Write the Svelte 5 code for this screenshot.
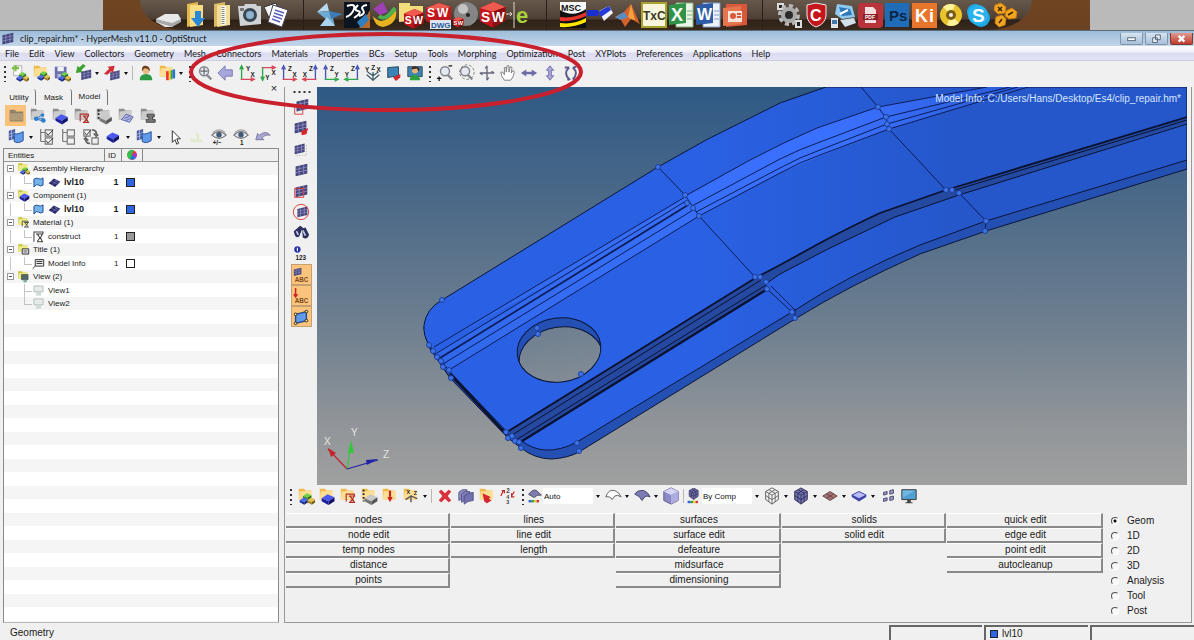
<script>
  let page = $state('Geom');
  let tab = $state('Model');

  const pages = ['Geom', '1D', '2D', '3D', 'Analysis', 'Tool', 'Post'];
  const menus = [
    'File', 'Edit', 'View', 'Collectors', 'Geometry', 'Mesh', 'Connectors', 'Materials',
    'Properties', 'BCs', 'Setup', 'Tools', 'Morphing', 'Optimization', 'Post', 'XYPlots',
    'Preferences', 'Applications', 'Help'
  ];
  const columns = [
    ['nodes', 'node edit', 'temp nodes', 'distance', 'points'],
    ['lines', 'line edit', 'length'],
    ['surfaces', 'surface edit', 'defeature', 'midsurface', 'dimensioning'],
    ['solids', 'solid edit'],
    ['quick edit', 'edge edit', 'point edit', 'autocleanup']
  ];

  // '|' separator, ':' grip, 'v' drop-down arrow
  const dockItems = [
    'drive', 'download', 'zip', 'camera', 'cards', '|',
    'fold', 'catia', 'swirl', 'swfolder', 'swdwg', 'sphere', 'sw', 'edraw', '|',
    'msc', 'flag', 'matlab', 'txc', 'excel', 'word', 'ppt', '|',
    'gear', 'shield', 'network', 'pdf', 'ps', 'ki', 'disc', 'skype', 'hexes'
  ];
  const mainTools = [
    ':', 'newModel', 'openModel', 'saveModel', 'importFile', 'v', 'exportFile', 'v', '|',
    'user', 'colorFolder', 'v', ':', 'fit', 'back', 'xyTop', 'xyBottom', 'xzLeft', 'xzRight',
    'yzLeft', 'yzRight', 'iso', 'reverse', 'userView', ':',
    'zoomInOut', 'zoomCircle', 'center', 'hand', 'arrowsH', 'arrowsV', 'rotate'
  ];
  const treeTools = ['fEntity', 'fAssembly', 'fComp', 'fMaterial', 'fProperty', 'fSet', 'fLoad'];
  const showTools = [
    'sheets', 'v', 'checkAll', 'checkNone', 'checkSwap', 'blueBox', 'v', 'sheets', 'v',
    'cursor', 'faded', 'eyePm', 'eyeOne', 'undo'
  ];
  const sideTools = [
    'maskBox', 'maskRed', 'maskDots', 'meshOnly', 'maskSquare', 'maskRound', 'binoculars',
    'info', 'abcMesh', 'abcArrow', 'handles'
  ];
  const lowA = [
    ':', 'cAssembly', 'cComp', 'cMaterial', 'cProperty', 'cLoad', 'cSystem', 'v', '|',
    'redX', 'stack', 'folderArrow', 'renumber', ':'
  ];
  const lowB = ['wireSurf', 'v', 'shadeSurf', 'v', 'shadeCube', '|'];
  const lowC = ['wireCube', 'v', 'solidCube', 'v', 'redSheet', 'v', 'blueSheet', 'v', 'shrink', 'monitor'];

  const tree = [
    { name: 'Assembly Hierarchy', icon: 'tAssembly' },
    { name: 'lvl10', icon: 'tSheet', pair: true, id: 1, color: '#2f66e0' },
    { name: 'Component (1)', icon: 'tComp' },
    { name: 'lvl10', icon: 'tSheet', pair: true, id: 1, color: '#2f66e0' },
    { name: 'Material (1)', icon: 'tMaterial' },
    { name: 'construct', icon: 'tBeam', id: 1, color: '#999999' },
    { name: 'Title (1)', icon: 'tTitle' },
    { name: 'Model Info', icon: 'tNote', id: 1, color: '#ffffff' },
    { name: 'View (2)', icon: 'tView' },
    { name: 'View1', icon: 'tGhost', more: true },
    { name: 'View2', icon: 'tGhost' }
  ];

  const mesh = (x = 3, y = 3, k = 1) =>
    `<g transform="translate(${x} ${y}) scale(${k})"><path d="M0 3L13 0V11L0 14Z" fill="#45467e"/><path d="M0 6.500L13 3.500M0 10L13 7M4 2V13M9 1V12" stroke="#a5a5d2" stroke-width=".7"/></g>`;
  const box = (x, y, k = 1, a = '#4a5af0', b = '#1a1f9c', c = '#10136a') =>
    `<g transform="translate(${x} ${y}) scale(${k})"><path d="M0 4L6 0L13 3L7 7Z" fill="${a}"/><path d="M0 4V7L7 11V7Z" fill="${b}"/><path d="M7 7L13 3V7L7 11Z" fill="${c}"/></g>`;
  const trio = (x, y, k = 1) =>
    `<g transform="translate(${x} ${y}) scale(${k})">${box(3, 0, 0.6, '#6fd04a', '#2f8a1c', '#1f6a12')}${box(0, 4, 0.6, '#4a6af0', '#1a2f9c', '#102070')}${box(7, 4, 0.6, '#e0c050', '#a08020', '#705810')}</g>`;
  const folder = (a = '#ffe9a8', b = '#f0b94a') =>
    `<path d="M2 2H8L9 4H16V14H2Z" fill="${b}"/><path d="M3 5L17 4L16 13L2 14Z" fill="${a}" opacity=".8"/>`;
  const grey = folder('#dcdcdc', '#8e8e8e');
  const beam = (x, y, c = '#b03028') =>
    `<path transform="translate(${x} ${y})" d="M0 9V1H9V3M3 3H10M3 10H10M4 3L7 6.5L4 10M9 3L7 6.5L9 10" fill="none" stroke="${c}" stroke-width="1.3"/>`;
  const lens = (x, y) =>
    `<path d="M${x + 3} ${y + 4}L${x + 8} ${y + 9}" stroke="#8a8a94" stroke-width="2.6"/><circle cx="${x}" cy="${y}" r="5" fill="#e6e8f2" stroke="#83838e" stroke-width="1.6"/>`;
  const word = (x, y, s, size = 7, c = '#222') =>
    `<text x="${x}" y="${y}" font-size="${size}" font-weight="700" fill="${c}">${s}</text>`;
  const up = (x, c) => `<path d="M${x} 17V3M${x - 2} 6L${x} 2L${x + 2} 6" fill="none" stroke="${c}" stroke-width="1.5"/>`;
  const right = (y, c) => `<path d="M3 ${y}H17M14 ${y - 2}L18 ${y}L14 ${y + 2}" fill="none" stroke="${c}" stroke-width="1.5"/>`;
  const left = (y, c) => `<path d="M17 ${y}H3M6 ${y - 2}L2 ${y}L6 ${y + 2}" fill="none" stroke="${c}" stroke-width="1.5"/>`;
  const G = '#2fa84e', R = '#d8475a', B = '#4b55b8';
  const eye = '<path d="M2 8Q10 0 18 8Q10 15 2 8Z" fill="#e9e9ee" stroke="#777" stroke-width="1.2"/><circle cx="10" cy="7.500" r="3" fill="#3f5b78"/><path d="M3 5Q10-1 17 5" fill="none" stroke="#888"/>';
  const swBlock = (x, y, k) =>
    `<g transform="translate(${x} ${y}) scale(${k})"><path d="M0 6L14 0L26 5V19L13 26L0 20Z" fill="#c3161c"/><path d="M0 6L14 0L26 5L13 10Z" fill="#ee5a50"/><path d="M13 10L26 5V19L13 26Z" fill="#8e0e12"/>${word(1, 20, 'S', 14, '#fff')}${word(12, 20, 'W', 14, '#fff')}</g>`;
  const cubeLines = (f, s) =>
    `<path d="M3 5L10 1L17 5V14L10 19L3 14Z" fill="${f}" stroke="${s}"/><path d="M3 5L10 9L17 5M10 9V19M3 9.500L10 14L17 9.500M6.500 3L13.500 7V16.500M13.500 3L6.500 7V16.500" fill="none" stroke="${s}" stroke-width=".9"/>`;

  const icons = {
    newModel: '<path d="M3 2H12V13H3Z" fill="#fafafa" stroke="#aaa"/><path d="M5 1V8M1 4.500H9" stroke="#7ac043" stroke-width="2.4"/>' + trio(6, 9, 1),
    openModel: folder() + trio(6, 8, 1),
    saveModel: '<path d="M2 3H15V16H2Z" fill="#6d70aa"/><path d="M5 3H12V8H5Z" fill="#f2f2fa"/><path d="M5 11H12V16H5Z" fill="#b6b8d8"/>' + trio(6, 9, 1),
    importFile: mesh(8, 6, 0.85) + '<path d="M13 2L8 7L10 9L2 10L4 2L6 4L10 0Z" fill="#3da02f"/>',
    exportFile: mesh(8, 7, 0.8) + '<path d="M1 11L7 5L5 3L13 2L11 10L9 8L5 12Z" fill="#d12d35"/>',
    user: '<path d="M3 18Q3 11 10 11T17 18Z" fill="#2f9a45"/><circle cx="10" cy="7" r="4" fill="#eab884"/><path d="M5.500 8Q5 1 10 2T14 8Q12 4 8 5Z" fill="#6a3f1f"/>',
    colorFolder: folder() + '<path d="M9 8H12V18H9Z" fill="#e33"/><path d="M12 7H14V18H12Z" fill="#fc3"/><path d="M14 7H16V17H14Z" fill="#3a3"/><path d="M16 6H19V16H16Z" fill="#27c"/>',
    fit: lens(9, 8) + '<path d="M5 8H13M9 4V12" stroke="#666" stroke-width="1.300"/>',
    back: '<path d="M1 10L9 2V6.500H17V13.500H9V18Z" fill="#a9a6dc" stroke="#7976b6"/>',
    xyTop: up(4, G) + right(17, R) + word(9, 8, 'Y') + word(14, 14, 'X'),
    xyBottom: right(4, R) + '<path d="M4 4V17M2 14L4 18L6 14" fill="none" stroke="#2fa84e" stroke-width="1.500"/>' + word(14, 12, 'X') + word(7, 18, 'Y'),
    xzLeft: up(4, B) + right(17, R) + word(9, 8, 'Z') + word(14, 14, 'X'),
    xzRight: up(16, B) + left(17, R) + word(9, 8, 'Z') + word(2, 14, 'X'),
    yzLeft: up(4, B) + right(17, G) + word(9, 8, 'Z') + word(14, 14, 'Y'),
    yzRight: up(16, B) + left(17, G) + word(9, 8, 'Z') + word(2, 14, 'Y'),
    iso: '<path d="M10 19V9M10 13L4 9M10 13L16 9M3 12L10 18L17 12" stroke="#3f5b66" stroke-width="1.400" fill="none"/>' + word(1, 9, 'Y') + word(8, 7, 'Z') + word(14, 9, 'X'),
    reverse: '<path d="M3 4L15 3V13L3 15Z" fill="#3d83b8" stroke="#245"/><path d="M9 15L17 11V15L12 19Z" fill="#d8262e"/>',
    userView: '<path d="M2 3H18V14H2Z" fill="#3d83b8" stroke="#345"/><circle cx="10" cy="7" r="3.500" fill="#e6b27c"/><path d="M6 6Q7 1 12 3T14 8L12 5Z" fill="#3b2a1a"/><path d="M4 18Q5 11 10 12T16 18Z" fill="#2ca040"/>',
    zoomInOut: lens(10, 8) + '<path d="M14 2H18M1 16H6M3.500 14V19" stroke="#111" stroke-width="1.400"/>',
    zoomCircle: lens(9, 8) + '<circle cx="11" cy="9" r="8" fill="none" stroke="#777" stroke-dasharray="3 2"/>',
    center: '<path d="M10 2V18M2 10H18M10 2L8 5M18 10L15 8M10 18L12 15M2 10L5 12" stroke="#66667c" stroke-width="1.500" fill="none"/>',
    hand: '<path d="M6 18Q2 13 2 9L4 9L6 12V4H8V9L9 2H11V9L12.500 3L14.500 4L13.500 10L16 7L17 9Q16 15 13 18Z" fill="#fff" stroke="#777"/>',
    arrowsH: '<path d="M1 10L7 6V8.500H13V6L19 10L13 14V11.500H7V14Z" fill="#6e6aa8"/>',
    arrowsV: '<path d="M10 2L14 7H11.500V13H14L10 18L6 13H8.500V7H6Z" fill="#aaa8da" stroke="#6e6aa8"/>',
    rotate: '<path d="M8 4Q1 10 8 17L6 18M8 4L3 4M12 4Q19 10 12 17M12 17L16 18M12 4L16 3" fill="none" stroke="#5a5c8c" stroke-width="2.200"/>',
    fEntity: '<path d="M3 3H9L10 5H18V16H3Z" fill="#8f8266"/><path d="M3 7H18V15H3Z" fill="#b09c78"/>',
    fAssembly: grey + '<path d="M8 13L14 9M8 13L15 16M8 13H16" stroke="#2d7fd0"/><circle cx="8" cy="13" r="2.500" fill="#2d7fd0"/><circle cx="15" cy="9" r="2" fill="#2d7fd0"/><circle cx="16" cy="15" r="2.500" fill="#2d7fd0"/>',
    fComp: grey + box(5, 8, 1.05),
    fMaterial: grey + beam(8, 7),
    fProperty: grey + box(5, 8, 1.05, '#c8c8c8', '#777', '#555') + '<path d="M4 3V14" stroke="#222" stroke-width="2" stroke-dasharray="2 2"/>',
    fSet: grey + '<path d="M5 14L10 8L18 11L14 17Z" fill="#b6b9e6" stroke="#5a5fa8"/><path d="M8 13L14 10M10 15L16 12" stroke="#5a5fa8"/>',
    fLoad: grey + '<path d="M9 8H17V11H15V14H18V17H8V14H11V11H9Z" fill="#777" stroke="#444"/>',
    sheets: '<path d="M2 3L9 1V12L2 14Z" fill="#4e5f9e"/><path d="M2 7L9 5M2 10L9 8M5 2V13" stroke="#9fb0e8"/><path d="M8 6Q11 8 18 4V14Q12 18 8 15Z" fill="#5f9bea" stroke="#24478f"/>',
    checkAll: '<path d="M8 2H16V9H8ZM8 11H16V18H8ZM3 1V15M3 5H8M3 15H8" fill="none" stroke="#777" stroke-width="1.300"/><path d="M9 5L11 8L17 2M9 14L11 17L17 11" fill="none" stroke="#333"/>',
    checkNone: '<path d="M8 2H16V9H8ZM8 11H16V18H8ZM3 1V15M3 5H8M3 15H8" fill="none" stroke="#777" stroke-width="1.300"/>',
    checkSwap: '<path d="M2 2H9V9H2ZM11 11H18V18H11Z" fill="none" stroke="#777" stroke-width="1.300"/><path d="M3 5L5 8L10 2" fill="none" stroke="#333"/><path d="M11 2Q17 2 16 9L18 7M16 9L13 6M9 17Q4 18 4 11L2 13M4 11L7 14" fill="none" stroke="#666" stroke-width="2"/>',
    blueBox: box(3, 5, 1.05),
    cursor: '<path d="M7 3V16L10 13L12 18L14 17L12 12H16Z" fill="#fff" stroke="#222"/>',
    faded: '<path d="M3 12H16V16H3Z" fill="#e3ead0"/><path d="M8 4L13 9L11 14" fill="#dfe9c4"/>',
    eyePm: eye + word(3, 19, '+/−', 7),
    eyeOne: eye + word(9, 19, '1', 7),
    undo: '<path d="M2 13L4 6L6 8Q13 2 18 8Q12 7 9 11L11 13Z" fill="#a9a6d4" stroke="#77749e"/>',
    maskBox: mesh(5, 1) + '<path d="M3 9H12V18H3Z" fill="none" stroke="#d33"/>',
    maskRed: mesh(3, 2) + '<path d="M10 14L18 10L16 17L11 18Z" fill="#d8262e"/>',
    maskDots: mesh(3, 4, 0.85) + '<path d="M5 17H16V4" fill="none" stroke="#999" stroke-dasharray="1 2"/>',
    meshOnly: mesh(4, 3),
    maskSquare: mesh(4, 3) + '<path d="M3 7H13V17H3Z" fill="none" stroke="#d33"/>',
    maskRound: mesh(6, 4, 0.85) + '<circle cx="10" cy="10" r="8.500" fill="none" stroke="#d33"/>',
    binoculars: '<path d="M2 8L9 2L12 4L8 14Q4 16 3 12M11 5L15 4L19 12Q17 18 12 15Z" fill="#2c2f5c"/><path d="M5 8L7 12M12 7L15 13" stroke="#c0c4e8" stroke-width="2"/>',
    info: '<circle cx="6" cy="5" r="3.500" fill="#2430a8"/><path d="M6 3V7" stroke="#fff" stroke-width="1.200"/>' + word(4, 17, '123', 7),
    abcMesh: mesh(2, 2, 0.65) + word(3, 18, 'ABC', 7, '#7a4a1c'),
    abcArrow: '<path d="M4 1V10M2 8L4 11L6 8" stroke="#c22" stroke-width="1.600" fill="none"/>' + word(3, 18, 'ABC', 7, '#7a4a1c'),
    handles: '<path d="M4 7L16 4V14L4 17Z" fill="#5f9bea" stroke="#24478f" stroke-width="1.500"/><g fill="#ffe36a" stroke="#222"><circle cx="4" cy="7" r="1.500"/><circle cx="16" cy="4" r="1.500"/><circle cx="16" cy="14" r="1.500"/><circle cx="4" cy="17" r="1.500"/></g>',
    cAssembly: folder() + trio(3, 7, 1.2),
    cComp: folder() + box(4, 8, 1.1),
    cMaterial: folder() + beam(8, 7),
    cProperty: folder() + box(5, 8, 1.1, '#c8c8c8', '#777', '#555') + '<path d="M4 3V16" stroke="#222" stroke-width="2" stroke-dasharray="2 2"/>',
    cLoad: folder() + '<path d="M10 4V11" stroke="#c22" stroke-width="2.400"/><path d="M7 11H13L10 17Z" fill="#c22"/>',
    cSystem: folder() + '<path d="M10 17V10L4 14M10 10L17 13" stroke="#555" stroke-width="1.500" fill="none"/>' + word(5, 8, 'X', 6) + word(13, 9, 'Z', 6),
    redX: '<path d="M3 5L6 3L10 7L14 3L17 5L13 10L17 15L14 17L10 13L6 17L3 15L7 10Z" fill="#d8343c"/>',
    stack: '<path d="M2 6Q5 2 11 3V12Q6 12 2 15Z" fill="#8d8bc0" stroke="#5c5a90"/><path d="M5 8Q8 4 14 5V14Q9 14 5 17Z" fill="#807eb8" stroke="#54528a"/><path d="M8 10Q12 6 18 6V15Q12 15 8 19Z" fill="#7472ae" stroke="#4e4c84"/>',
    folderArrow: folder() + '<path d="M5 7L14 11L12 13L15 15L10 18L7 16Z" fill="#d8262e"/>',
    renumber: word(8, 7, '2', 7, '#444') + word(8, 13, '4', 6, '#444') + word(8, 19, '3', 6, '#444') + '<path d="M2 10L5 4M3 4H6V7M14 10L17 5M14 7V11H17" fill="none" stroke="#c22" stroke-width="1.300"/>',
    surfAuto: '<path d="M2 8Q7 1 12 3L18 9Q12 8 9 12Z" fill="#7d7bb2" stroke="#444"/><path d="M2 15H6V18H2Z" fill="#36c"/><path d="M6 15H9V18H6Z" fill="#3a3"/><path d="M9 15H12V18H9Z" fill="#ec3"/><path d="M12 15H15V18H12Z" fill="#d33"/>',
    byComp: '<g transform="scale(.8) translate(2 -1)">' + cubeLines('#6f6eae', '#2b2b4c') + '</g><path d="M2 16H6V19H2Z" fill="#36c"/><path d="M6 16H9V19H6Z" fill="#3a3"/><path d="M9 16H12V19H9Z" fill="#ec3"/><path d="M12 16H15V19H12Z" fill="#d33"/>',
    wireSurf: '<path d="M2 11Q5 2 12 4Q17 6 19 11Q15 8 12 10L9 14Q7 10 2 11Z" fill="#fff" stroke="#555"/>',
    shadeSurf: '<path d="M2 8Q5 3 12 4Q17 6 19 11Q15 9 13 11L10 15Q8 10 2 8Z" fill="#7d7bb2" stroke="#3c3b66"/>',
    shadeCube: '<path d="M2 5L10 1L18 5V15L10 19L2 15Z" fill="#8c8ac6" stroke="#55548a"/><path d="M2 5L10 9L18 5L10 1Z" fill="#d6d5f5"/><path d="M10 9L18 5V15L10 19Z" fill="#aeacdf"/>',
    wireCube: cubeLines('#f4f4f4', '#555'),
    solidCube: cubeLines('#7372b4', '#2b2b4c'),
    redSheet: '<path d="M2 10L10 5L18 10L10 15Z" fill="#a86e70" stroke="#5d4648"/><path d="M6 7.500L14 12.500M14 7.500L6 12.500" stroke="#5d4648"/>',
    blueSheet: '<path d="M2 9L10 5L18 9V11L10 16L2 11Z" fill="#3d43a8"/><path d="M2 9L10 5L18 9L10 13Z" fill="#b9bbf5" stroke="#3d43a8"/>',
    shrink: '<g fill="#9a98c8" stroke="#44436a"><path d="M5 6L9 5V8L5 9ZM12 4L16 3V7L12 8ZM5 13L9 12V15L5 16ZM12 11L16 10V14L12 15Z"/></g>',
    monitor: '<path d="M2 3H18V14H2Z" fill="#4f9fd2" stroke="#333"/><path d="M8 14H12V17H14V18H6V17H8Z" fill="#444"/><path d="M3 4H17L3 12Z" fill="#8cc7ea" opacity=".6"/>',
    // tree
    tAssembly: folder('#f8f59a', '#c9c43a') + trio(5, 8, 1.1),
    tComp: folder('#f8f59a', '#c9c43a') + box(4, 7, 1.15),
    tMaterial: folder('#f8f59a', '#c9c43a') + beam(8, 7, '#444'),
    tTitle: folder('#f8f59a', '#c9c43a') + '<path d="M8 9H18V17H8Z" fill="#eee" stroke="#333" stroke-width="1.500"/><path d="M10 12H16M10 14H16" stroke="#333"/>',
    tView: folder('#f8f59a', '#c9c43a') + '<path d="M7 7H17V15H7Z" fill="#566" stroke="#344"/><path d="M10 15H15V19H10Z" fill="#7a9"/>',
    tSheet: '<path d="M3 5Q7 2 10 4T17 3V14Q13 17 10 14T3 17Z" fill="#74b4ea" stroke="#1d4b96" stroke-width="1.500"/>',
    tMesh: '<path d="M1 11L9 4L19 9L11 17Z" fill="#2b2b6c"/><path d="M5 8L15 13M10 6L17 11M6 14L14 7" stroke="#7d7db8" stroke-width="1"/>',
    tBeam: '<path d="M3 18V3H17V6M6 6H17M8 18H17M8 6L12 12L8 18M16 6L13 12L16 18" fill="none" stroke="#444" stroke-width="1.600"/>',
    tNote: '<path d="M5 4H18V14H5Z" fill="#eee" stroke="#333" stroke-width="1.500"/><path d="M7 7H16M7 10H16M5 14L1 18" stroke="#333" stroke-width="1.500"/>',
    tGhost: '<path d="M3 3H17V12H3Z" fill="#e6ecea" stroke="#b5bfbb" stroke-width="1.500"/><path d="M6 12H14V18H6Z" fill="#cfdcd6"/>',
    wheel: '<circle cx="10" cy="10" r="8" fill="#e33"/><path d="M10 10L3 6A8 8 0 0 1 13 2Z" fill="#3b5"/><path d="M10 10L3 6A8 8 0 0 0 7 17Z" fill="#2c4"/><path d="M10 10L7 17A8 8 0 0 0 17 14Z" fill="#27d"/><path d="M10 10L17 14A8 8 0 0 0 17 6Z" fill="#a3c"/>',
    app: mesh(2, 1, 1.2)
  };

  const dockIcons = {
    drive: '<path d="M1 17L10 12H23L26 17L17 25H10L1 20Z" fill="#e9e9e9"/><path d="M1 17L17 21L26 17V20L17 25L1 20Z" fill="#a9a9a9"/>',
    download: '<path d="M5 2L16 0V22L5 25Z" fill="#e3b94e"/><path d="M8 3H21V23L8 25Z" fill="#f7dd83"/><path d="M13 9H19V16H23L16 25L9 16H13Z" fill="#2c86d8"/>',
    zip: '<path d="M5 2L16 0V22L5 25Z" fill="#d9b860"/><path d="M8 3H21V23L8 25Z" fill="#f3dc96"/><path d="M12 4H17V23H12Z" fill="#f8f8ee"/><path d="M14 5V22" stroke="#888" stroke-width="3" stroke-dasharray="1 1"/>',
    camera: '<path d="M2 4H8L9 2H20L21 4H25V22L4 24Z" fill="#cfd3d6"/><circle cx="14" cy="13" r="7" fill="#394654"/><circle cx="14" cy="13" r="4" fill="#8fb2cf"/><path d="M4 6H8V9H4Z" fill="#777"/>',
    cards: '<path d="M1 5L13 1L18 16L8 20Z" fill="#f3f3f3" stroke="#333"/><path d="M10 3L25 8L19 25L5 20Z" fill="#fff" stroke="#445"/><path d="M12 8L21 11M11 11L20 14M10 14L19 17M9 17L17 20" stroke="#5b62b8" stroke-width="1.500"/>',
    fold: '<path d="M0 10L12 9L10 1Z" fill="#b8d9ee"/><path d="M0 10L14 9L18 24Z" fill="#6eaad4"/><path d="M12 9L26 12L14 17Z" fill="#3b7db4"/><path d="M3 24L10 15L18 24Z" fill="#a9d2ee"/>',
    catia: '<path d="M0 0H26V26H0Z" fill="#0b1520"/><path d="M15 26L26 8V26Z" fill="#b86a2c"/><path d="M13 20L22 12L25 18L17 26Z" fill="#2f7fc2"/><path d="M3 4Q12 1 10 7T2 15M14 3Q9 8 14 9T10 16M23 3Q16 4 19 8T15 14" stroke="#fff" stroke-width="2" fill="none"/>',
    swirl: '<path d="M2 7L12 0L17 10L9 13Z" fill="#9d3fb5"/><path d="M2 14Q12 26 25 8Q27 22 12 25Q3 24 2 14Z" fill="#e7b21f"/><path d="M8 14Q14 20 24 6" stroke="#4bb04f" stroke-width="4" fill="none"/>',
    swfolder: '<path d="M1 1H12V4H25V18L1 20Z" fill="#f3dc7c"/>' + swBlock(6, 7, 0.75),
    swdwg: '<path d="M1 6L14 1L26 5V18L13 25L1 19Z" fill="#c3161c"/><path d="M1 6L14 1L26 5L13 8Z" fill="#ee5a50"/>' + word(2, 15, 'S', 12, '#fff') + word(12, 15, 'W', 12, '#fff') + '<path d="M5 18H26V27H5Z" fill="#dbe6f2"/>' + word(6, 26, 'DWG', 8, '#2a5c94'),
    sphere: '<circle cx="14" cy="12" r="12" fill="#858585"/><circle cx="11" cy="7" r="5" fill="#c4c4c4"/><circle cx="16" cy="13" r="2" fill="#222"/>' + swBlock(1, 15, 0.4),
    sw: swBlock(1, 0, 0.98),
    edraw: '<path d="M0 12H6M4 10L6 12L4 14M8 0V26" stroke="#ded6c8" fill="none"/>' + word(10, 21, 'e', 22, '#a7d13c'),
    msc: '<path d="M0 0H26V26H0Z" fill="#f8f8f8"/><path d="M0 8Q13 16 26 7V26H0Z" fill="#111"/><path d="M0 15Q14 17 26 10V14Q14 20 0 19Z" fill="#e8332a"/><path d="M0 21Q14 23 26 16V20Q14 26 0 25Z" fill="#ffe800"/>' + word(1, 9, 'MSC', 9, '#111'),
    flag: '<path d="M0 8H11V14H0Z" fill="#1b2fd0"/><path d="M12 9L22 4L26 11L17 19Z" fill="#f1f1f6"/><path d="M11 10L22 4L24 8L14 15Z" fill="#2338d8"/>',
    matlab: '<path d="M1 15L10 10L17 2L26 22L17 17L11 25L7 18Z" fill="#d2622a"/><path d="M1 15L10 10L14 15L7 18Z" fill="#5a8cc0"/><path d="M17 2L21 18L17 17L14 15Z" fill="#f3a03d"/>',
    txc: '<path d="M1 1H25V25H1Z" fill="#f7f6dc" stroke="#a6a32c" stroke-width="2"/>' + word(2, 18, 'TxC', 12, '#3b3b20'),
    excel: '<path d="M8 1H25V25H8Z" fill="#e9f4e6" stroke="#7fb17c"/><path d="M1 3L18 1V21L1 23Z" fill="#2f9448"/><path d="M19 9H24M19 13H24M19 17H24" stroke="#7fb17c"/>' + word(3, 19, 'X', 18, '#fff'),
    word: '<path d="M8 1H25V25H8Z" fill="#eef3fb" stroke="#7f9bc8"/><path d="M1 3L18 1V21L1 23Z" fill="#2c5ca8"/><path d="M19 9H24M19 13H24M19 17H24" stroke="#7f9bc8"/>' + word(2, 18, 'W', 16, '#fff'),
    ppt: '<path d="M4 2H25V23L4 25Z" fill="#d9583a"/><path d="M1 6L19 4V22L1 24Z" fill="#e5764f"/><path d="M6 9H20V20H6Z" fill="#fae4dc"/><circle cx="11" cy="14" r="3" fill="#d9583a"/><path d="M15 12H19M15 15H19" stroke="#d9583a" stroke-width="2"/>',
    gear: '<path d="M1 1H8V8H1ZM19 18H26V26H19Z" fill="#ddd"/><path d="M3 3H6V6H3ZM21 20H24V24H21Z" fill="#222"/><circle cx="13" cy="13" r="9" fill="none" stroke="#b7b7b7" stroke-width="4" stroke-dasharray="4 3"/><circle cx="13" cy="13" r="8" fill="#a9a9a9"/><circle cx="13" cy="13" r="4" fill="#2b2b2b"/>',
    shield: '<path d="M4 3L13 1L23 3V14Q22 22 13 25Q5 22 4 14Z" fill="#c4161c" stroke="#eee"/>' + word(7, 19, 'C', 16, '#fff'),
    network: '<path d="M7 2L22 4L25 15L12 17L5 12Z" fill="#8fc9ec"/><path d="M9 5L20 7L22 13L12 14Z" fill="#2c78b8"/><path d="M10 12L18 8" stroke="#fff" stroke-width="2"/><path d="M10 18L24 16L26 21L15 25Z" fill="#cfe0ea"/><path d="M1 16H8V26H1Z" fill="#dfe4ea"/><path d="M2 18H7V22H2Z" fill="#47a"/>',
    pdf: '<rect x="1" y="1" width="25" height="25" rx="4" fill="#b8333c"/><path d="M8 5H16L19 8V21H8Z" fill="#f6dfe0"/><path d="M6 12H21V18H6Z" fill="#8d1f28"/>' + word(8, 17, 'PDF', 5, '#fff'),
    ps: '<path d="M1 1H25V25H1Z" fill="#1f6db8"/>' + word(5, 19, 'Ps', 15, '#0b2748'),
    ki: '<path d="M1 1H26V26H1Z" fill="#e8752c"/>' + word(4, 20, 'K', 18, '#fff') + word(18, 20, 'i', 18, '#fff'),
    disc: '<circle cx="13" cy="13" r="11" fill="#e8c32c"/><path d="M13 13L5 5A11 11 0 0 1 17 3ZM13 13L21 21A11 11 0 0 1 9 23Z" fill="#fff29a"/><circle cx="13" cy="13" r="5" fill="#7a5c12"/><circle cx="13" cy="13" r="2" fill="#eee"/>',
    skype: '<circle cx="10" cy="10" r="8" fill="#1fa6e2"/><circle cx="16" cy="16" r="9" fill="#1fa6e2"/><circle cx="13" cy="13" r="10" fill="#28b2ee"/>' + word(7, 20, 'S', 19, '#fff'),
    hexes: '<g fill="#f2a620" stroke="#c67a10"><path d="M3 3L9 1L14 5L13 11L6 12L2 8Z"/><path d="M14 9L20 6L25 10L24 16L17 17L13 14Z"/><path d="M4 15L10 13L14 17L13 23L7 25L3 21Z"/></g><path d="M6 5L10 9M10 5L6 9M16 13L21 10M7 21L10 17" stroke="#3a2500" stroke-width="1.500"/>'
  };

  // vertex markers of the part
  const points = [
    [442, 300], [658, 167], [685, 195], [687, 203], [693, 208], [699, 216], [429, 345], [433, 351],
    [437, 357], [441, 361], [443, 367], [449, 370], [451, 378], [537, 328], [538, 334], [581, 374],
    [506, 432], [508, 438], [512, 436], [515, 441], [519, 442], [521, 448], [577, 443], [579, 451],
    [755, 277], [760, 277], [766, 282], [767, 289], [792, 312], [795, 318], [878, 107], [886, 117],
    [887, 124], [889, 129], [946, 190], [952, 190], [959, 193], [986, 221], [985, 231]
  ];
</script>

{#snippet icon(name)}
  <svg class="icon" viewBox="0 0 20 20" aria-hidden="true">{@html icons[name]}</svg>
{/snippet}

{#snippet tools(list)}
  {#each list as t}
    {#if t === ':'}
      <span class="grip"></span>
    {:else if t === '|'}
      <span class="sep"></span>
    {:else if t === 'v'}
      <button class="drop" aria-label="more"></button>
    {:else}
      <button class="tool {t}" aria-label={t}>{@render icon(t)}</button>
    {/if}
  {/each}
{/snippet}

<div class="app">
  <div class="desktop">
    <div class="dock">
      {#each dockItems as d}
        {#if d === '|'}
          <span class="dock-sep"></span>
        {:else}
          <button class="launcher" aria-label={d}>
            <svg viewBox="0 0 27 27" aria-hidden="true">{@html dockIcons[d]}</svg>
          </button>
        {/if}
      {/each}
    </div>
  </div>

  <header class="titlebar">
    {@render icon('app')}
    <span class="title">clip_repair.hm* - HyperMesh v11.0 - OptiStruct</span>
    <button class="win" aria-label="minimize"><svg viewBox="0 0 22 12"><rect x="7" y="5" width="8" height="3" fill="#fff" stroke="#567" /></svg></button>
    <button class="win" aria-label="restore"><svg viewBox="0 0 22 12"><path d="M10 2H15V7H10ZM7 5H12V10H7Z" fill="#e8f0f8" stroke="#567" /></svg></button>
    <button class="win close" aria-label="close"><svg viewBox="0 0 22 12"><path d="M8 3L14 9M14 3L8 9" stroke="#fff" stroke-width="2.400" /></svg></button>
  </header>

  <nav class="menubar">
    {#each menus as m}<button>{m}</button>{/each}
  </nav>

  <div class="toolbar">{@render tools(mainTools)}</div>

  <main>
    <aside class="browser">
      <div class="tabs">
        {#each ['Utility', 'Mask', 'Model'] as t}
          <button class:active={tab === t} onclick={() => (tab = t)}>{t}</button>
        {/each}
        <button class="dismiss" aria-label="close panel">×</button>
      </div>
      <div class="row first">{@render tools(treeTools)}</div>
      <div class="row">{@render tools(showTools)}</div>
      <div class="tree">
        <table>
          <thead>
            <tr><th class="name">Entities</th><th class="id">ID</th><th class="hue">{@render icon('wheel')}</th><th></th></tr>
          </thead>
          <tbody>
            {#each tree as n}
              {@const child = n.id || n.icon === 'tGhost'}
              <tr>
                <td>
                  <div class="node" class:child class:link={n.id} class:more={n.more} class:bold={n.pair}>
                    {#if !child}<span class="box"></span>{/if}
                    {@render icon(n.icon)}
                    {#if n.pair}{@render icon('tMesh')}{/if}
                    <span>{n.name}</span>
                  </div>
                </td>
                <td class="num" class:bold={n.pair}>{n.id ?? ''}</td>
                <td>{#if n.color}<span class="swatch" style:background={n.color}></span>{/if}</td>
                <td></td>
              </tr>
            {/each}
          </tbody>
        </table>
      </div>
    </aside>

    <section class="work">
      <div class="upper">
        <div class="side">
          <span class="dots"></span>
          {@render tools(sideTools)}
        </div>
        <div class="viewport">
          <svg viewBox="317 87 870 398" preserveAspectRatio="xMidYMid slice">
            <defs>
              <linearGradient id="sky" gradientUnits="userSpaceOnUse" x1="0" y1="87" x2="0" y2="485">
                <stop offset="0" stop-color="#2e5985" />
                <stop offset=".3" stop-color="#4d6a88" />
                <stop offset=".6" stop-color="#6e7f90" />
                <stop offset=".85" stop-color="#919599" />
                <stop offset="1" stop-color="#a0a0a0" />
              </linearGradient>
              <linearGradient id="skin" gradientUnits="userSpaceOnUse" x1="700" y1="0" x2="960" y2="0">
                <stop offset="0" stop-color="#2a61e4" />
                <stop offset="1" stop-color="#2557ca" />
              </linearGradient>
              <linearGradient id="rib" gradientUnits="userSpaceOnUse" x1="430" y1="0" x2="1020" y2="0">
                <stop offset="0" stop-color="#3068ea" />
                <stop offset=".45" stop-color="#386ffa" />
                <stop offset=".7" stop-color="#3a70ff" />
                <stop offset="1" stop-color="#2a5cd6" />
              </linearGradient>
              <clipPath id="bore"><ellipse cx="559" cy="350" rx="42" ry="32" transform="rotate(-8 559 350)" /></clipPath>
            </defs>
            <rect x="0" y="87" width="1600" height="398" fill="url(#sky)" />

            <!-- thickness, then the top face -->
            <path d="M424 327Q425 338 430 349L450 378L508 438L521 448Q535 459 552 459Q568 458 579 452L795 319Q850 285 920 254L986 231L1187 169V150L780 290L520 435L449 360Z" fill="#2450b4" stroke="#0b1538" />
            <path d="M442 300L658 167L706 140L780 103L826 87H1187V160L986 221L920 245Q850 274 792 312L577 442Q560 451 545 450Q532 449 522 441L508 433L450 372L429 345Q423 335 424 325Q426 309 442 300Z" fill="url(#skin)" stroke="#0b1538" />

            <!-- raised rib -->
            <path d="M437 353L686 203Q750 160 817 128L878 107L987 87H1028L889 129L820 156L780 173L699 216L449 370Z" fill="url(#rib)" />
            <path d="M434 347L685 197L750 160Q784 142 817 128L878 107L987 87L886 117L820 142L780 159L693 204Z" fill="url(#rib)" />
            <g fill="none" stroke="#0d1c58">
              <path d="M434 347L685 197M437 353L686 201M443 364L693 210M449 370L699 216L780 173Q800 162 820 155L889 129L1028 87" />
              <path d="M440 358L688 205" stroke-width="1.800" />
              <path d="M685 196L750 160Q784 142 817 128L878 107L987 87M692 206L780 159Q800 149 820 142L886 117L1010 87M696 212L780 168Q800 157 820 150L887 124L1018 87" />
              <path d="M658 167L685 195L699 216L755 277M767 289L792 312M771 286L795 310V319" />
              <path d="M861 87L878 107L886 118L889 129L946 190M959 193L986 221L985 231" />
            </g>

            <!-- groove -->
            <path d="M507 432L757 276L769 288L519 443Z" fill="#2548a0" />
            <path d="M757 277L780 265L820 243L880 213L946 190L1187 118V123L959 195L895 217L830 248L780 274L767 283Z" fill="#2449a0" />
            <g fill="none" stroke="#0a1230">
              <path d="M507 432L757 277L780 265L820 243Q848 228 880 213L946 190L1187 117" stroke-width="1.800" />
              <path d="M512 435L761 280M516 440L766 285" />
              <path d="M519 443L769 288" stroke-width="2.200" />
              <path d="M767 283L780 274L830 248L895 217L959 195L1187 124M952 191L1187 120" />
              <path d="M450 374L508 436" stroke-width="2.600" />
            </g>

            <g clip-path="url(#bore)">
              <rect x="510" y="310" width="100" height="80" fill="#2450b4" />
              <ellipse cx="561" cy="359" rx="42" ry="32" transform="rotate(-8 561 359)" fill="url(#sky)" stroke="#0b1538" />
            </g>
            <ellipse cx="559" cy="350" rx="42" ry="32" transform="rotate(-8 559 350)" fill="none" stroke="#0b1538" />

            {#each points as [x, y]}
              <circle cx={x} cy={y} r="2.500" fill="#3f74e6" stroke="#1c3f9e" />
            {/each}

            <!-- axis triad -->
            <path d="M347 469L328 449" stroke="#c2242c" stroke-width="1.200" />
            <path d="M328 448L331 457L336 453Z" fill="#c2242c" />
            <path d="M347 469L351 444" stroke="#2fc83c" stroke-width="1.200" />
            <path d="M351 440L348 453H354Z" fill="#2fc83c" />
            <path d="M347 469L378 460" stroke="#2222a8" stroke-width="1.200" />
            <path d="M378 459L366 460L367 465Z" fill="#2222a8" />
            <g fill="#e4e4e4" font-size="10">
              <text x="324" y="445">X</text><text x="351" y="436">Y</text><text x="383" y="458">Z</text>
            </g>
          </svg>
          <p class="caption">Model Info: C:/Users/Hans/Desktop/Es4/clip_repair.hm*</p>
        </div>
      </div>

      <div class="toolbar lower">
        {@render tools(lowA)}
        <label class="combo">
          {@render icon('surfAuto')}
          <select aria-label="Surface mode"><option>Auto</option></select>
          <span class="drop"></span>
        </label>
        {@render tools(lowB)}
        <label class="combo">
          {@render icon('byComp')}
          <select aria-label="Color mode"><option>By Comp</option></select>
          <span class="drop"></span>
        </label>
        {@render tools(lowC)}
      </div>

      <div class="panel">
        <div class="commands">
          {#each columns as col}
            <div class="col">
              {#each col as c}<button>{c}</button>{/each}
            </div>
          {/each}
        </div>
        <div class="pages">
          {#each pages as p}
            <label><input type="radio" name="page" value={p} bind:group={page} />{p}</label>
          {/each}
        </div>
      </div>
    </section>
  </main>

  <footer>
    <span class="state">Geometry</span>
    <span class="cell"></span>
    <span class="cell"><i></i>lvl10</span>
    <span class="cell"></span>
  </footer>

  <svg class="marker" viewBox="0 0 400 84" aria-hidden="true">
    <ellipse cx="200" cy="42" rx="195" ry="38" fill="none" stroke="#c9202e" stroke-width="4" />
  </svg>
</div>

<style>
  :global(body) {
    background: #f0f0f0;
  }
  .app {
    position: relative;
    display: flex;
    flex-direction: column;
    min-height: 100vh;
    background: #f0f0f0;
    color: #1a1a1a;
    font-family: 'Liberation Sans', Arial, sans-serif;
    font-size: 8px;
  }
  button {
    margin: 0;
    padding: 0;
    border: 0;
    background: none;
    color: inherit;
    font: inherit;
  }
  svg {
    display: block;
  }

  /* Desktop strip */
  .desktop {
    display: flex;
    height: 30px;
    padding: 0 104px 0 103px;
    background: linear-gradient(#704522, #6a4122) content-box, #bababa;
  }
  .dock {
    flex: 1;
    display: flex;
    margin: 0 58px 0 37px;
    padding-left: 15px;
    border-radius: 0 0 44px 44px / 0 0 30px 30px;
    background: linear-gradient(#66594c 0, #4d3f34 19px, #2e2118 20px, #3a2a1e 30px);
  }
  .launcher {
    flex: none;
    width: 27px;
  }
  .launcher svg {
    width: 27px;
    height: 27px;
    overflow: visible;
  }
  .dock-sep {
    flex: none;
    width: 27px;
    background: linear-gradient(#2a1f18, #2a1f18) center / 1px 100% no-repeat;
  }

  /* Window chrome */
  .titlebar {
    display: flex;
    align-items: center;
    gap: 2px;
    height: 16px;
    padding: 0 1px;
    box-sizing: border-box;
    border-top: 1px solid #5b6c7c;
    background: linear-gradient(#9dbcd9, #c3d6ea);
    font-family: Lato, 'Open Sans', sans-serif;
    font-size: 9px;
  }
  .titlebar .icon {
    width: 14px;
    height: 14px;
  }
  .title {
    flex: 1;
    padding-left: 3px;
  }
  .win {
    width: 23px;
    height: 12px;
    border: 1px solid #7e94aa;
    border-top: 0;
    border-radius: 0 0 2px 2px;
    background: linear-gradient(#d6e4f1, #a9c0d8);
  }
  .win.close {
    background: linear-gradient(#e09a8e, #c03a2c);
    border-color: #7a3a38;
  }
  .menubar {
    display: flex;
    gap: 10px;
    height: 15px;
    padding-left: 5px;
    box-sizing: border-box;
    border-bottom: 1px solid #cdcde0;
    background: linear-gradient(#fdfdff 0, #eeeef9 45%, #dcdcf2 50%, #e2e2f4);
    font-family: Lato, 'Open Sans', sans-serif;
    font-size: 9px;
  }

  /* Tool strips */
  .toolbar {
    display: flex;
    align-items: center;
    height: 26px;
    padding-bottom: 2px;
    box-sizing: border-box;
  }
  .tool {
    flex: none;
    display: grid;
    place-items: center;
    width: 21px;
    height: 21px;
  }
  .icon {
    flex: none;
    width: 18px;
    height: 18px;
  }
  .grip {
    flex: none;
    width: 9px;
    height: 17px;
    background: linear-gradient(#333 2px, transparent 2px) center / 2px 5px repeat-y;
  }
  .sep {
    flex: none;
    width: 5px;
    height: 14px;
    background: linear-gradient(#b8b8b8, #b8b8b8) center / 1px 100% no-repeat;
  }
  .drop {
    flex: none;
    width: 8px;
    height: 18px;
  }
  .drop::before {
    content: '';
    display: block;
    margin: 0 auto;
    width: 0;
    border: 2px solid transparent;
    border-top: 3px solid #111;
    border-bottom: 0;
  }
  span.drop {
    height: auto;
  }

  main {
    flex: 1;
    display: flex;
    min-height: 0;
  }

  /* Model browser */
  .browser {
    flex: none;
    display: flex;
    flex-direction: column;
    width: 280px;
    padding-left: 3px;
    box-sizing: border-box;
  }
  .tabs {
    display: flex;
    align-items: flex-end;
    height: 18px;
  }
  .tabs button {
    width: 36px;
    height: 16px;
    border-right: 1px solid #777;
    border-radius: 0 3px 0 0;
  }
  .tabs button:first-child {
    width: 33px;
  }
  .tabs .active {
    padding-bottom: 2px;
  }
  .tabs .dismiss {
    width: 12px;
    height: 18px;
    margin-left: auto;
    padding-bottom: 16px;
    border: 0;
    font-size: 11px;
    line-height: 2px;
  }
  .row {
    display: flex;
    align-items: center;
    gap: 1px;
    height: 22px;
    padding-left: 2px;
  }
  .row.first {
    height: 21px;
  }
  .tool.fEntity {
    background: #fbc27a;
  }
  .tree {
    flex: 1;
    margin-right: 1px;
    border: 1px solid #8a8a8a;
    border-bottom-color: #bbb;
    background: repeating-linear-gradient(#f5f5f5 0 13px, #fff 13px 27px) 0 13px;
  }
  table {
    width: 100%;
    border-collapse: collapse;
    table-layout: fixed;
  }
  th,
  td {
    padding: 0;
    font-weight: 400;
    text-align: left;
  }
  th {
    height: 12px;
    padding-left: 4px;
    border-right: 1px solid #888;
    border-bottom: 1px solid #999;
    background: #efefef;
  }
  th:last-child {
    border-right: 0;
  }
  th.name {
    width: 96px;
  }
  th.id {
    width: 13px;
    padding-left: 3px;
  }
  th.hue {
    width: 16px;
  }
  th .icon {
    width: 12px;
    height: 12px;
  }
  td {
    height: 13px;
    line-height: 13px;
  }
  tbody tr:nth-child(even) td {
    height: 14px;
  }
  .node {
    position: relative;
    display: flex;
    align-items: center;
    gap: 3px;
    padding-left: 3px;
    height: 13px;
    white-space: nowrap;
  }
  .node .icon {
    width: 13px;
    height: 13px;
  }
  .box {
    width: 5px;
    height: 5px;
    border: 1px solid #999;
    background: linear-gradient(#555, #555) center / 3px 1px no-repeat #fff;
  }
  .node.child {
    padding-left: 28px;
  }
  .node.link {
    background: linear-gradient(#c8c8c8, #c8c8c8) 6px 0 / 1px 100% no-repeat;
  }
  .node.child::before {
    content: '';
    position: absolute;
    left: 20px;
    top: 0;
    width: 7px;
    height: 7px;
    border-left: 1px solid #c4c4c4;
    border-bottom: 1px solid #c4c4c4;
  }
  .node.more::after {
    content: '';
    position: absolute;
    left: 20px;
    top: 7px;
    height: 7px;
    border-left: 1px solid #c4c4c4;
  }
  .bold {
    font-size: 9px;
    font-weight: 700;
  }
  .num {
    text-align: right;
    padding-right: 3px;
  }
  .swatch {
    display: block;
    width: 7px;
    height: 7px;
    margin-left: 4px;
    border: 1px solid #222;
  }

  /* Work area */
  .work {
    flex: 1;
    display: flex;
    flex-direction: column;
    min-width: 0;
    margin: 0 2px 0 4px;
    border: 1px solid #999;
    border-top: 0;
  }
  .upper {
    flex: 1;
    display: flex;
    min-height: 0;
    padding-right: 4px;
  }
  .side {
    display: flex;
    flex-direction: column;
    align-items: center;
    width: 32px;
  }
  .dots {
    width: 20px;
    height: 9px;
    background: linear-gradient(90deg, #333 2px, transparent 2px) center / 5px 2px repeat-x;
  }
  .side .abcMesh,
  .side .abcArrow,
  .side .handles {
    background: #fcc37c;
    outline: 1px solid #c4a070;
    outline-offset: -1px;
  }
  .viewport {
    position: relative;
    flex: 1;
    background: #6e7f90;
  }
  .viewport svg {
    position: absolute;
    inset: 0;
    width: 100%;
    height: 100%;
  }
  .caption {
    position: absolute;
    top: 6px;
    right: 6px;
    margin: 0;
    color: #d6e6fa;
    font-size: 10px;
    line-height: 12px;
  }
  .lower {
    height: 22px;
    padding: 0 0 0 1px;
  }
  .combo {
    display: flex;
    align-items: center;
    width: 75px;
  }
  .combo .icon {
    width: 16px;
    height: 16px;
  }
  .combo select {
    flex: 1;
    min-width: 0;
    height: 16px;
    margin-right: 1px;
    padding: 0 1px;
    border: 0;
    appearance: none;
    background: #fff;
    color: #111;
    font: inherit;
  }

  .panel {
    display: flex;
    padding: 6px 0 4px;
  }
  .commands {
    flex: 1;
    display: grid;
    grid-template-columns: 165fr 165fr 165fr 165fr 157fr;
    align-items: start;
  }
  .col {
    display: flex;
    flex-direction: column;
    padding-left: 1px;
  }
  .col button {
    height: 15px;
    padding-left: 3px;
    border-top: 1px solid #fff;
    border-right: 2px solid #8a8a8a;
    border-bottom: 2px solid #8a8a8a;
    font-size: 10px;
    line-height: 12px;
  }
  .pages {
    display: flex;
    flex-direction: column;
    width: 80px;
    margin-left: 8px;
  }
  .pages label {
    display: flex;
    align-items: center;
    gap: 8px;
    height: 15px;
    font-size: 10px;
  }
  .pages input {
    appearance: none;
    width: 8px;
    height: 8px;
    margin: 0;
    border: 1px solid;
    border-color: #555 #fff #fff #555;
    border-radius: 50%;
    background: #f8f8f8;
  }
  .pages input:checked {
    background: radial-gradient(circle, #111 1px, #f8f8f8 2px);
  }

  /* Status bar */
  footer {
    display: flex;
    gap: 2px;
    height: 17px;
    padding-top: 2px;
    box-sizing: border-box;
    font-size: 10px;
    line-height: 15px;
  }
  .state {
    flex: 1;
    padding-left: 10px;
  }
  .cell {
    display: flex;
    align-items: center;
    gap: 4px;
    width: 104px;
    padding-left: 4px;
    box-sizing: border-box;
    border-top: 2px solid #666;
    border-left: 2px solid #666;
  }
  .cell:nth-child(2) {
    width: 93px;
  }
  .cell i {
    width: 6px;
    height: 6px;
    border: 1px solid #223;
    background: #2f66e0;
  }

  .marker {
    position: absolute;
    left: 186px;
    top: 30px;
    width: 400px;
    height: 84px;
    pointer-events: none;
  }
</style>
